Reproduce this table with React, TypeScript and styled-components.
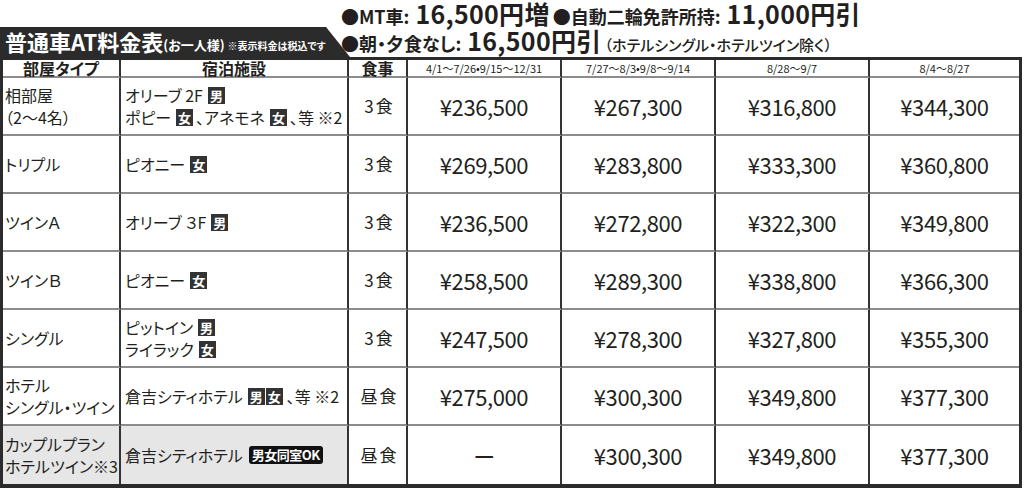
import styled, { createGlobalStyle } from "styled-components";

const GlobalStyle = createGlobalStyle`
  html, body {
    margin: 0;
    padding: 0;
    background: #ffffff;
  }
  body {
    font-family: "Noto Sans CJK JP", "Noto Sans", sans-serif;
    color: #231f20;
    font-feature-settings: "palt";
  }
`;

const Page = styled.div`
  width: 1024px;
  height: 489px;
  overflow: hidden;
`;

const Heading = styled.div`
  height: 57px;
  display: flex;
  align-items: flex-end;
`;

const TitleTab = styled.div`
  width: 350px;
  height: 30px;
  flex-shrink: 0;
  background: #2b2b2b;
  color: #ffffff;
  clip-path: polygon(0 0, 326px 0, 100% 100%, 0 100%);
  display: flex;
  align-items: flex-end;
  padding: 0 0 3px 5px;
  box-sizing: border-box;
  white-space: nowrap;
`;

const TitleMain = styled.span`
  font-size: 22px;
  font-weight: 700;
  line-height: 26px;
  font-feature-settings: normal;
`;

const TitleSub = styled.span`
  font-size: 13px;
  font-weight: 700;
  line-height: 18px;
`;

const TitleNote = styled.span`
  font-size: 10px;
  font-weight: 700;
  line-height: 16px;
  margin-left: 3px;
`;

const Notes = styled.div`
  display: flex;
  flex-direction: column;
  margin-left: -9px;
  align-self: stretch;
  white-space: nowrap;
`;

const NoteLine = styled.div`
  display: flex;
  align-items: baseline;
  font-weight: 700;
  line-height: 27px;
  height: 27px;
`;

const NoteText = styled.span`
  font-size: 18px;
`;

const NoteValue = styled.span`
  font-size: 25px;
  margin-right: 3px;
  letter-spacing: 0.3px;
`;

const NoteSmall = styled.span`
  font-size: 15px;
  font-weight: 500;
`;

const Table = styled.div`
  width: 1022px;
  box-sizing: border-box;
  border: 3px solid #2b2b2b;
  border-bottom-width: 4px;
  display: grid;
  grid-template-columns: 118px 228px 59px 154px 154px 154px 1fr;
  grid-template-rows: 18px repeat(7, 58px);
`;

const Cell = styled.div<{ $align?: "left" | "center"; $shade?: boolean; $last?: boolean; $bottom?: boolean }>`
  box-sizing: border-box;
  display: flex;
  flex-direction: column;
  justify-content: center;
  align-items: ${(p) => (p.$align === "left" ? "flex-start" : "center")};
  padding: ${(p) => (p.$align === "left" ? "0 0 0 2px" : "0")};
  border-right: ${(p) => (p.$last ? "none" : "2px solid #333333")};
  border-bottom: ${(p) => (p.$bottom ? "none" : "2px solid #8c8c8c")};
  background: ${(p) => (p.$shade ? "#e6e6e6" : "#ffffff")};
  white-space: nowrap;
`;

const HeadLabel = styled.span`
  font-size: 16px;
  font-weight: 700;
  line-height: 16px;
`;

const DateLabel = styled.span`
  font-size: 11px;
  line-height: 14px;
`;

const RoomText = styled.span`
  font-size: 16px;
  line-height: 22px;
`;

const FacilityText = styled.span`
  font-size: 16px;
  line-height: 22px;
  padding-left: 2px;
  display: flex;
  align-items: center;
`;

const Meal = styled.span`
  font-size: 17px;
  line-height: 22px;
  letter-spacing: 2px;
  padding-left: 4px;
`;

const Price = styled.span`
  font-size: 22px;
  line-height: 26px;
  letter-spacing: -0.4px;
`;

const Badge = styled.span`
  display: inline-flex;
  align-items: center;
  justify-content: center;
  width: 17px;
  height: 17px;
  background: #333333;
  color: #ffffff;
  font-size: 13px;
  font-weight: 700;
  line-height: 17px;
  margin: 0 3px 0 5px;
`;

const BadgePair = styled.span`
  display: inline-flex;
  gap: 1px;
  margin: 0 4px 0 5px;
  & > span {
    margin: 0;
  }
`;

const WideBadge = styled.span`
  display: inline-flex;
  align-items: center;
  height: 18px;
  padding: 0 3px;
  border-radius: 3px;
  background: #111111;
  color: #ffffff;
  font-size: 13px;
  font-weight: 700;
  letter-spacing: -0.5px;
  margin-left: 6px;
`;

type Row = {
  room: string[];
  facility: React.ReactNode[];
  meal: string;
  prices: string[];
  shade?: boolean;
};

const rows: Row[] = [
  {
    room: ["相部屋", "（2〜4名）"],
    facility: [
      <>オリーブ 2F<Badge>男</Badge></>,
      <>ポピー<Badge>女</Badge>、アネモネ<Badge>女</Badge>、等 ※2</>,
    ],
    meal: "3食",
    prices: ["¥236,500", "¥267,300", "¥316,800", "¥344,300"],
  },
  {
    room: ["トリプル"],
    facility: [<>ピオニー<Badge>女</Badge></>],
    meal: "3食",
    prices: ["¥269,500", "¥283,800", "¥333,300", "¥360,800"],
  },
  {
    room: ["ツインＡ"],
    facility: [<>オリーブ ３F<Badge>男</Badge></>],
    meal: "3食",
    prices: ["¥236,500", "¥272,800", "¥322,300", "¥349,800"],
  },
  {
    room: ["ツインＢ"],
    facility: [<>ピオニー<Badge>女</Badge></>],
    meal: "3食",
    prices: ["¥258,500", "¥289,300", "¥338,800", "¥366,300"],
  },
  {
    room: ["シングル"],
    facility: [<>ピットイン<Badge>男</Badge></>, <>ライラック<Badge>女</Badge></>],
    meal: "3食",
    prices: ["¥247,500", "¥278,300", "¥327,800", "¥355,300"],
  },
  {
    room: ["ホテル", "シングル・ツイン"],
    facility: [
      <>倉吉シティホテル<BadgePair><Badge>男</Badge><Badge>女</Badge></BadgePair>、等 ※2</>,
    ],
    meal: "昼食",
    prices: ["¥275,000", "¥300,300", "¥349,800", "¥377,300"],
  },
  {
    room: ["カップルプラン", "ホテルツイン※3"],
    facility: [<>倉吉シティホテル<WideBadge>男女同室OK</WideBadge></>],
    meal: "昼食",
    prices: ["ー", "¥300,300", "¥349,800", "¥377,300"],
    shade: true,
  },
];

const dates = ["4/1〜7/26•9/15〜12/31", "7/27〜8/3•9/8〜9/14", "8/28〜9/7", "8/4〜8/27"];

export default function App() {
  return (
    <Page>
      <GlobalStyle />
      <Heading>
        <TitleTab>
          <TitleMain>普通車AT料金表</TitleMain>
          <TitleSub>(お一人様)</TitleSub>
          <TitleNote>※表示料金は税込です</TitleNote>
        </TitleTab>
        <Notes>
          <NoteLine>
            <NoteText>●MT車: </NoteText>
            <NoteValue>&nbsp;16,500円増</NoteValue>
            <NoteText>●自動二輪免許所持: </NoteText>
            <NoteValue>&nbsp;11,000円引</NoteValue>
          </NoteLine>
          <NoteLine>
            <NoteText>●朝・夕食なし: </NoteText>
            <NoteValue>&nbsp;16,500円引</NoteValue>
            <NoteSmall>（ホテルシングル・ホテルツイン除く）</NoteSmall>
          </NoteLine>
        </Notes>
      </Heading>
      <Table>
        <Cell><HeadLabel>部屋タイプ</HeadLabel></Cell>
        <Cell><HeadLabel>宿泊施設</HeadLabel></Cell>
        <Cell><HeadLabel>食事</HeadLabel></Cell>
        {dates.map((d, i) => (
          <Cell key={d} $last={i === dates.length - 1}>
            <DateLabel>{d}</DateLabel>
          </Cell>
        ))}
        {rows.map((row, r) => {
          const bottom = r === rows.length - 1;
          return (
            <>
              <Cell key={`room-${r}`} $align="left" $shade={row.shade} $bottom={bottom}>
                {row.room.map((t) => (
                  <RoomText key={t}>{t}</RoomText>
                ))}
              </Cell>
              <Cell key={`fac-${r}`} $align="left" $shade={row.shade} $bottom={bottom}>
                {row.facility.map((f, i) => (
                  <FacilityText key={i}>{f}</FacilityText>
                ))}
              </Cell>
              <Cell key={`meal-${r}`} $bottom={bottom}>
                <Meal>{row.meal}</Meal>
              </Cell>
              {row.prices.map((p, i) => (
                <Cell key={`p-${r}-${i}`} $bottom={bottom} $last={i === row.prices.length - 1}>
                  <Price>{p}</Price>
                </Cell>
              ))}
            </>
          );
        })}
      </Table>
    </Page>
  );
}
